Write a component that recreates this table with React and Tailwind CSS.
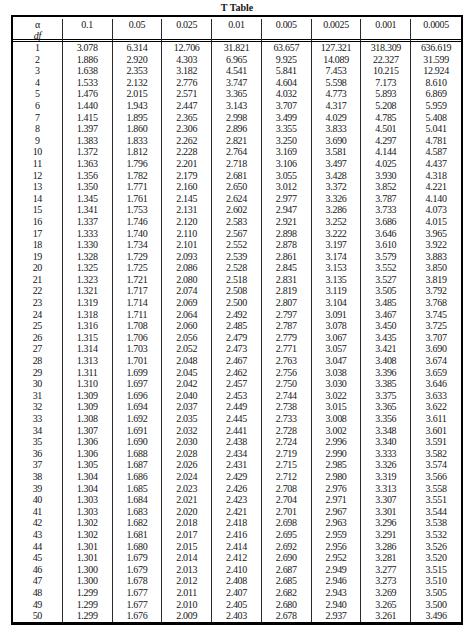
const alphas = ['0.1', '0.05', '0.025', '0.01', '0.005', '0.0025', '0.001', '0.0005']

// one line per df, values in alpha order
const raw = `3.078 6.314 12.706 31.821 63.657 127.321 318.309 636.619
1.886 2.920 4.303 6.965 9.925 14.089 22.327 31.599
1.638 2.353 3.182 4.541 5.841 7.453 10.215 12.924
1.533 2.132 2.776 3.747 4.604 5.598 7.173 8.610
1.476 2.015 2.571 3.365 4.032 4.773 5.893 6.869
1.440 1.943 2.447 3.143 3.707 4.317 5.208 5.959
1.415 1.895 2.365 2.998 3.499 4.029 4.785 5.408
1.397 1.860 2.306 2.896 3.355 3.833 4.501 5.041
1.383 1.833 2.262 2.821 3.250 3.690 4.297 4.781
1.372 1.812 2.228 2.764 3.169 3.581 4.144 4.587
1.363 1.796 2.201 2.718 3.106 3.497 4.025 4.437
1.356 1.782 2.179 2.681 3.055 3.428 3.930 4.318
1.350 1.771 2.160 2.650 3.012 3.372 3.852 4.221
1.345 1.761 2.145 2.624 2.977 3.326 3.787 4.140
1.341 1.753 2.131 2.602 2.947 3.286 3.733 4.073
1.337 1.746 2.120 2.583 2.921 3.252 3.686 4.015
1.333 1.740 2.110 2.567 2.898 3.222 3.646 3.965
1.330 1.734 2.101 2.552 2.878 3.197 3.610 3.922
1.328 1.729 2.093 2.539 2.861 3.174 3.579 3.883
1.325 1.725 2.086 2.528 2.845 3.153 3.552 3.850
1.323 1.721 2.080 2.518 2.831 3.135 3.527 3.819
1.321 1.717 2.074 2.508 2.819 3.119 3.505 3.792
1.319 1.714 2.069 2.500 2.807 3.104 3.485 3.768
1.318 1.711 2.064 2.492 2.797 3.091 3.467 3.745
1.316 1.708 2.060 2.485 2.787 3.078 3.450 3.725
1.315 1.706 2.056 2.479 2.779 3.067 3.435 3.707
1.314 1.703 2.052 2.473 2.771 3.057 3.421 3.690
1.313 1.701 2.048 2.467 2.763 3.047 3.408 3.674
1.311 1.699 2.045 2.462 2.756 3.038 3.396 3.659
1.310 1.697 2.042 2.457 2.750 3.030 3.385 3.646
1.309 1.696 2.040 2.453 2.744 3.022 3.375 3.633
1.309 1.694 2.037 2.449 2.738 3.015 3.365 3.622
1.308 1.692 2.035 2.445 2.733 3.008 3.356 3.611
1.307 1.691 2.032 2.441 2.728 3.002 3.348 3.601
1.306 1.690 2.030 2.438 2.724 2.996 3.340 3.591
1.306 1.688 2.028 2.434 2.719 2.990 3.333 3.582
1.305 1.687 2.026 2.431 2.715 2.985 3.326 3.574
1.304 1.686 2.024 2.429 2.712 2.980 3.319 3.566
1.304 1.685 2.023 2.426 2.708 2.976 3.313 3.558
1.303 1.684 2.021 2.423 2.704 2.971 3.307 3.551
1.303 1.683 2.020 2.421 2.701 2.967 3.301 3.544
1.302 1.682 2.018 2.418 2.698 2.963 3.296 3.538
1.302 1.681 2.017 2.416 2.695 2.959 3.291 3.532
1.301 1.680 2.015 2.414 2.692 2.956 3.286 3.526
1.301 1.679 2.014 2.412 2.690 2.952 3.281 3.520
1.300 1.679 2.013 2.410 2.687 2.949 3.277 3.515
1.300 1.678 2.012 2.408 2.685 2.946 3.273 3.510
1.299 1.677 2.011 2.407 2.682 2.943 3.269 3.505
1.299 1.677 2.010 2.405 2.680 2.940 3.265 3.500
1.299 1.676 2.009 2.403 2.678 2.937 3.261 3.496`

const rows = raw.split('\n').map((line) => line.trim().split(' '))

function Cell({ children, last }) {
  return (
    <div className={last ? 'text-center' : 'text-center border-r border-[#2a2a2a]'}>
      {children}
    </div>
  )
}

export default function App() {
  return (
    <div className="w-[474px] h-[632px] bg-white text-[#151515] font-['Liberation_Serif',serif] overflow-hidden">
      <div className="h-[15px] pt-[2px] text-center font-bold text-[10px] leading-[11px]">
        T Table
      </div>
      <div className="ml-[11px] w-[452px] border-2 border-b-[3px] border-black">
        <div className="grid grid-cols-9 h-[25px] border-b-[3px] border-double border-black text-[10px] tracking-[-0.3px] leading-[11px] pt-[2px]">
          <Cell>
            <div>α</div>
            <div className="italic">df</div>
          </Cell>
          {alphas.map((a, i) => (
            <Cell key={a} last={i === alphas.length - 1}>{a}</Cell>
          ))}
        </div>
        {rows.map((vals, r) => (
          <div key={r} className="grid grid-cols-9 h-[11.6px] text-[10px] tracking-[-0.3px] leading-[12px]">
            <Cell>{r + 1}</Cell>
            {vals.map((v, i) => (
              <Cell key={i} last={i === vals.length - 1}>{v}</Cell>
            ))}
          </div>
        ))}
      </div>
    </div>
  )
}
